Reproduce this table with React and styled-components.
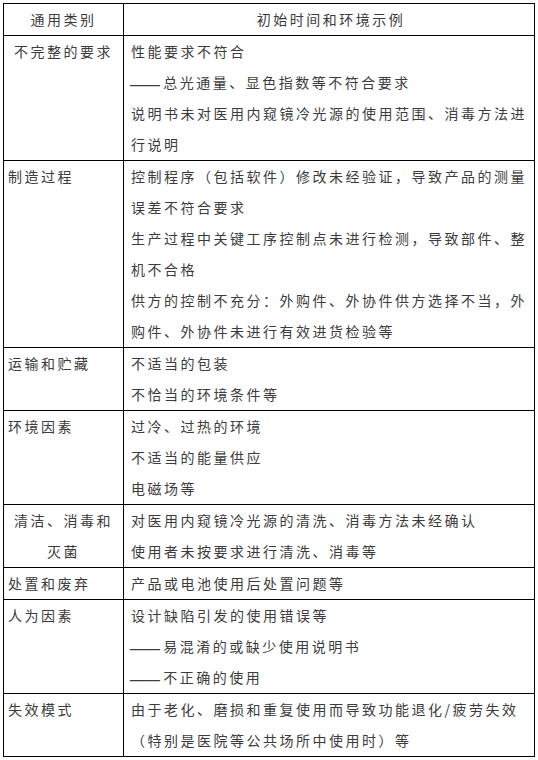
import React from "react";
import styled, { createGlobalStyle } from "styled-components";

const GlobalStyle = createGlobalStyle`
  * {
    box-sizing: border-box;
  }
  body {
    margin: 0;
    background: #fff;
  }
`;

const Page = styled.div`
  padding: 3px 0 0 3px;
`;

const Table = styled.table`
  width: 532px;
  table-layout: fixed;
  border-collapse: separate;
  border-spacing: 0;
  border-top: 1px solid #000;
  border-left: 1px solid #000;
  font-family: "Noto Sans CJK SC", "Noto Sans", sans-serif;
  font-size: 14px;
  letter-spacing: 2.5px;
  line-height: 31px;
  color: #3c3c3c;
`;

const Cell = styled.td`
  vertical-align: top;
  border-right: 1px solid #000;
  border-bottom: 1px solid #000;
  padding: 0;
`;

const HeaderCell = styled(Cell).attrs({ as: "th" })`
  font-weight: 400;
  text-align: center;
  padding: ${({ $wide }) => ($wide ? "0 3px 0 7px" : "0 4px")};
`;

const CategoryCell = styled(Cell)`
  padding: 0 4px;
  text-align: ${({ $center }) => ($center ? "center" : "left")};
`;

const DetailCell = styled(Cell)`
  padding: 0 3px 0 7px;
`;

const Line = styled.div`
  display: block;
`;

const Dash = styled.span`
  display: inline-block;
  letter-spacing: 0;
  font-size: 19px;
  line-height: 31px;
  margin-left: -2px;
  margin-right: 2.5px;
  vertical-align: top;
`;

const rows = [
  {
    category: "不完整的要求",
    center: true,
    lines: [
      "性能要求不符合",
      { dash: true, text: "总光通量、显色指数等不符合要求" },
      "说明书未对医用内窥镜冷光源的使用范围、消毒方法进行说明",
    ],
  },
  {
    category: "制造过程",
    lines: [
      "控制程序（包括软件）修改未经验证，导致产品的测量误差不符合要求",
      "生产过程中关键工序控制点未进行检测，导致部件、整机不合格",
      "供方的控制不充分：外购件、外协件供方选择不当，外购件、外协件未进行有效进货检验等",
    ],
  },
  {
    category: "运输和贮藏",
    lines: ["不适当的包装", "不恰当的环境条件等"],
  },
  {
    category: "环境因素",
    lines: ["过冷、过热的环境", "不适当的能量供应", "电磁场等"],
  },
  {
    category: "清洁、消毒和灭菌",
    center: true,
    lines: [
      "对医用内窥镜冷光源的清洗、消毒方法未经确认",
      "使用者未按要求进行清洗、消毒等",
    ],
  },
  {
    category: "处置和废弃",
    lines: ["产品或电池使用后处置问题等"],
  },
  {
    category: "人为因素",
    lines: [
      "设计缺陷引发的使用错误等",
      { dash: true, text: "易混淆的或缺少使用说明书" },
      { dash: true, text: "不正确的使用" },
    ],
  },
  {
    category: "失效模式",
    lines: [
      "由于老化、磨损和重复使用而导致功能退化/疲劳失效（特别是医院等公共场所中使用时）等",
    ],
  },
];

export default function App() {
  return (
    <Page>
      <GlobalStyle />
      <Table lang="zh-CN">
        <colgroup>
          <col style={{ width: 120 }} />
          <col style={{ width: 411 }} />
        </colgroup>
        <thead>
          <tr>
            <HeaderCell>通用类别</HeaderCell>
            <HeaderCell $wide>初始时间和环境示例</HeaderCell>
          </tr>
        </thead>
        <tbody>
          {rows.map((row) => (
            <tr key={row.category}>
              <CategoryCell $center={row.center}>{row.category}</CategoryCell>
              <DetailCell>
                {row.lines.map((line) =>
                  typeof line === "string" ? (
                    <Line key={line}>{line}</Line>
                  ) : (
                    <Line key={line.text}>
                      <Dash>——</Dash>
                      {line.text}
                    </Line>
                  )
                )}
              </DetailCell>
            </tr>
          ))}
        </tbody>
      </Table>
    </Page>
  );
}
